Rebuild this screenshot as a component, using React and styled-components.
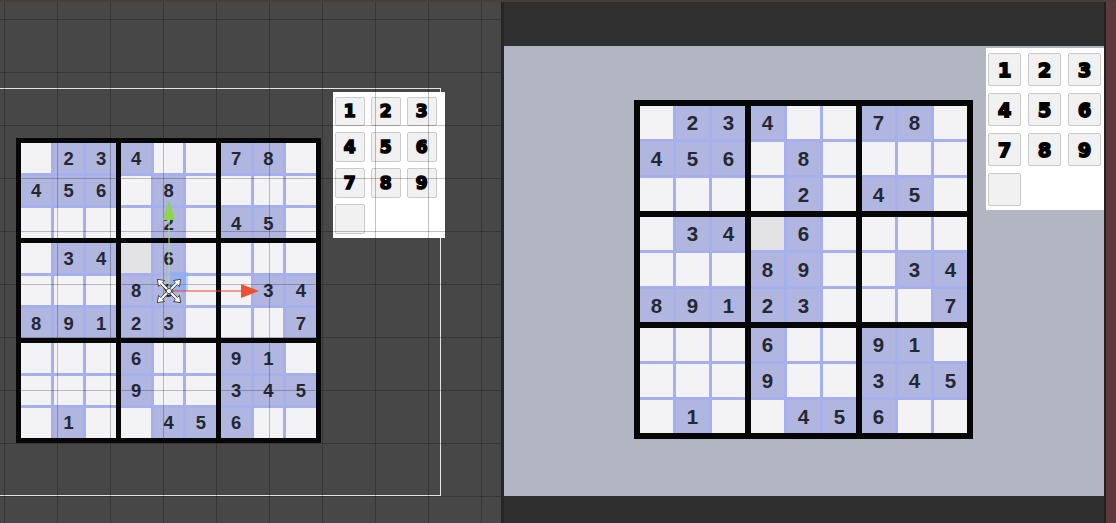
import React from 'react';
import styled, { createGlobalStyle } from 'styled-components';

const PUZZLE = [
  '.234..78.',
  '456.8....',
  '....2.45.',
  '.34g6....',
  '...89..34',
  '89123...7',
  '...6..91.',
  '...9..345',
  '.1..456..',
];

const PAD_KEYS = ['1', '2', '3', '4', '5', '6', '7', '8', '9', ''];

const GlobalStyle = createGlobalStyle`
  html, body {
    margin: 0;
    padding: 0;
    background: #2f2f2f;
  }
  body {
    font-family: "Liberation Sans", Arial, sans-serif;
  }
`;

const Window = styled.div`
  width: 1116px;
  height: 523px;
  box-sizing: border-box;
  border-top: 2px solid #4b3c3e;
  display: flex;
  overflow: hidden;
`;

const ScenePane = styled.div`
  position: relative;
  flex: none;
  width: 501px;
  height: 100%;
  background: #474747;
  overflow: hidden;
`;

const CanvasFrame = styled.div`
  margin-top: 86px;
  width: 441px;
  height: 408px;
  box-sizing: border-box;
  border: 1px solid #e4e4e4;
  border-left: none;
  display: flex;
  align-items: flex-start;
  gap: 12px;
  padding: 3px 0 0 16px;
`;

const GridOverlay = styled.div`
  position: absolute;
  inset: 0;
  pointer-events: none;
  background-image:
    linear-gradient(to right, rgba(0, 0, 0, 0.24) 1px, transparent 1px),
    linear-gradient(to bottom, rgba(0, 0, 0, 0.24) 1px, transparent 1px);
  background-size: 53px 53px;
  background-position: 4px 17px;
`;

const GizmoLayer = styled.svg`
  position: absolute;
  left: 0;
  top: 0;
  pointer-events: none;
`;

const Divider = styled.div`
  flex: none;
  width: 3px;
  background: #262626;
`;

const GamePane = styled.div`
  flex: none;
  width: 600px;
  display: flex;
  flex-direction: column;
`;

const TopBar = styled.div`
  flex: none;
  height: 44px;
  background: #303030;
`;

const GameView = styled.div`
  flex: none;
  height: 450px;
  background: #b1b6c2;
  display: flex;
  align-items: flex-start;
  gap: 13px;
  padding: 2px 0 0 130px;
  box-sizing: border-box;
  overflow: hidden;
`;

const BottomBar = styled.div`
  flex: 1;
  background: #2f2f2f;
`;

const EdgeStrip = styled.div`
  flex: 1;
  background: #5a3a3f;
  border-left: 2px solid #2a1d20;
`;

const Board = styled.div`
  flex: none;
  margin-top: ${p => p.$top}px;
  display: grid;
  grid-template-columns: repeat(3, ${p => 105 * p.$s}px);
  grid-auto-rows: ${p => 105 * p.$s}px;
  gap: ${p => 6 * p.$s}px;
  padding: ${p => 6 * p.$s}px;
  background: #060606;
`;

const Block = styled.div`
  display: grid;
  grid-template-columns: repeat(3, 1fr);
  grid-template-rows: repeat(3, 1fr);
  gap: ${p => 3 * p.$s}px;
  background: #a6b0ee;
`;

const cellColors = {
  num: '#b0b6df',
  sel: '#e3e3e6',
  empty: '#f3f3f5',
};

const Cell = styled.div`
  display: flex;
  align-items: center;
  justify-content: center;
  background: ${p => cellColors[p.$kind]};
  color: #242833;
  font-family: "Liberation Sans", Arial, sans-serif;
  font-weight: bold;
  font-size: ${p => 20.5 * p.$s}px;
  line-height: 1;
  padding-top: ${p => 2 * p.$s}px;
`;

const Palette = styled.div`
  flex: none;
  box-sizing: border-box;
  width: ${p => 124 * p.$s}px;
  padding: ${p => 5 * p.$s}px 0 ${p => 4 * p.$s}px ${p => 2 * p.$s}px;
  background: #ffffff;
  display: grid;
  grid-template-columns: repeat(3, ${p => 33 * p.$s}px);
  grid-auto-rows: ${p => 33 * p.$s}px;
  gap: ${p => 7 * p.$s}px;
`;

const PadButton = styled.div`
  box-sizing: border-box;
  background: #f1f1f1;
  border: 1px solid #cbcbcb;
  border-radius: 2px;
  display: flex;
  align-items: center;
  justify-content: center;
  color: #000;
  font-family: "DejaVu Sans", "Liberation Sans", sans-serif;
  font-weight: bold;
  font-size: ${p => 19 * p.$s}px;
  line-height: 1;
  padding-top: ${p => p.$s}px;
  -webkit-text-stroke: ${p => 1.8 * p.$s}px #000;
`;

function SudokuBoard({ s, top }) {
  const blocks = [];
  for (let b = 0; b < 9; b++) {
    const cells = [];
    for (let i = 0; i < 9; i++) {
      const r = Math.floor(b / 3) * 3 + Math.floor(i / 3);
      const c = (b % 3) * 3 + (i % 3);
      const ch = PUZZLE[r][c];
      const kind = ch === '.' ? 'empty' : ch === 'g' ? 'sel' : 'num';
      cells.push(
        <Cell key={i} $kind={kind} $s={s}>
          {kind === 'num' ? ch : ''}
        </Cell>
      );
    }
    blocks.push(<Block key={b} $s={s}>{cells}</Block>);
  }
  return <Board $s={s} $top={top}>{blocks}</Board>;
}

function NumberPad({ s }) {
  return (
    <Palette $s={s}>
      {PAD_KEYS.map((k, i) => (
        <PadButton key={i} $s={s}>{k}</PadButton>
      ))}
    </Palette>
  );
}

// move-tool handles drawn at the selected board's pivot
function MoveGizmo() {
  const cx = 169;
  const cy = 289;
  const arrow = 'M0,-1.3 L10.5,-1.3 L10.5,-4.3 L16.5,0 L10.5,4.3 L10.5,1.3 L0,1.3 Z';
  return (
    <GizmoLayer width="501" height="521" viewBox="0 0 501 521">
      <rect x={cx} y={cy - 19} width="19" height="19" fill="rgba(120,170,255,0.45)" />
      <line x1={cx} y1={cy} x2={cx} y2={cy - 72} stroke="#a6e36c" strokeWidth="1" />
      <polygon points={`${cx},${cy - 91} ${cx - 6},${cy - 71} ${cx + 6},${cy - 71}`} fill="#8fd44e" />
      <line x1={cx} y1={cy} x2={cx + 72} y2={cy} stroke="#e34b2f" strokeWidth="1" />
      <polygon points={`${cx + 90},${cy} ${cx + 72},${cy - 7} ${cx + 72},${cy + 7}`} fill="#ec5230" />
      <g transform={`translate(${cx},${cy})`} fill="#ffffff" stroke="#404040" strokeWidth="0.9">
        {[45, 135, 225, 315].map(a => (
          <path key={a} d={arrow} transform={`rotate(${a})`} />
        ))}
        <circle r="2.6" />
      </g>
    </GizmoLayer>
  );
}

export default function App() {
  return (
    <>
      <GlobalStyle />
      <Window>
        <ScenePane>
          <CanvasFrame>
            <SudokuBoard s={0.9} top={46} />
            <NumberPad s={0.9} />
          </CanvasFrame>
          <GridOverlay />
          <MoveGizmo />
        </ScenePane>
        <Divider />
        <GamePane>
          <TopBar />
          <GameView>
            <SudokuBoard s={1} top={52} />
            <NumberPad s={1} />
          </GameView>
          <BottomBar />
        </GamePane>
        <EdgeStrip />
      </Window>
    </>
  );
}
